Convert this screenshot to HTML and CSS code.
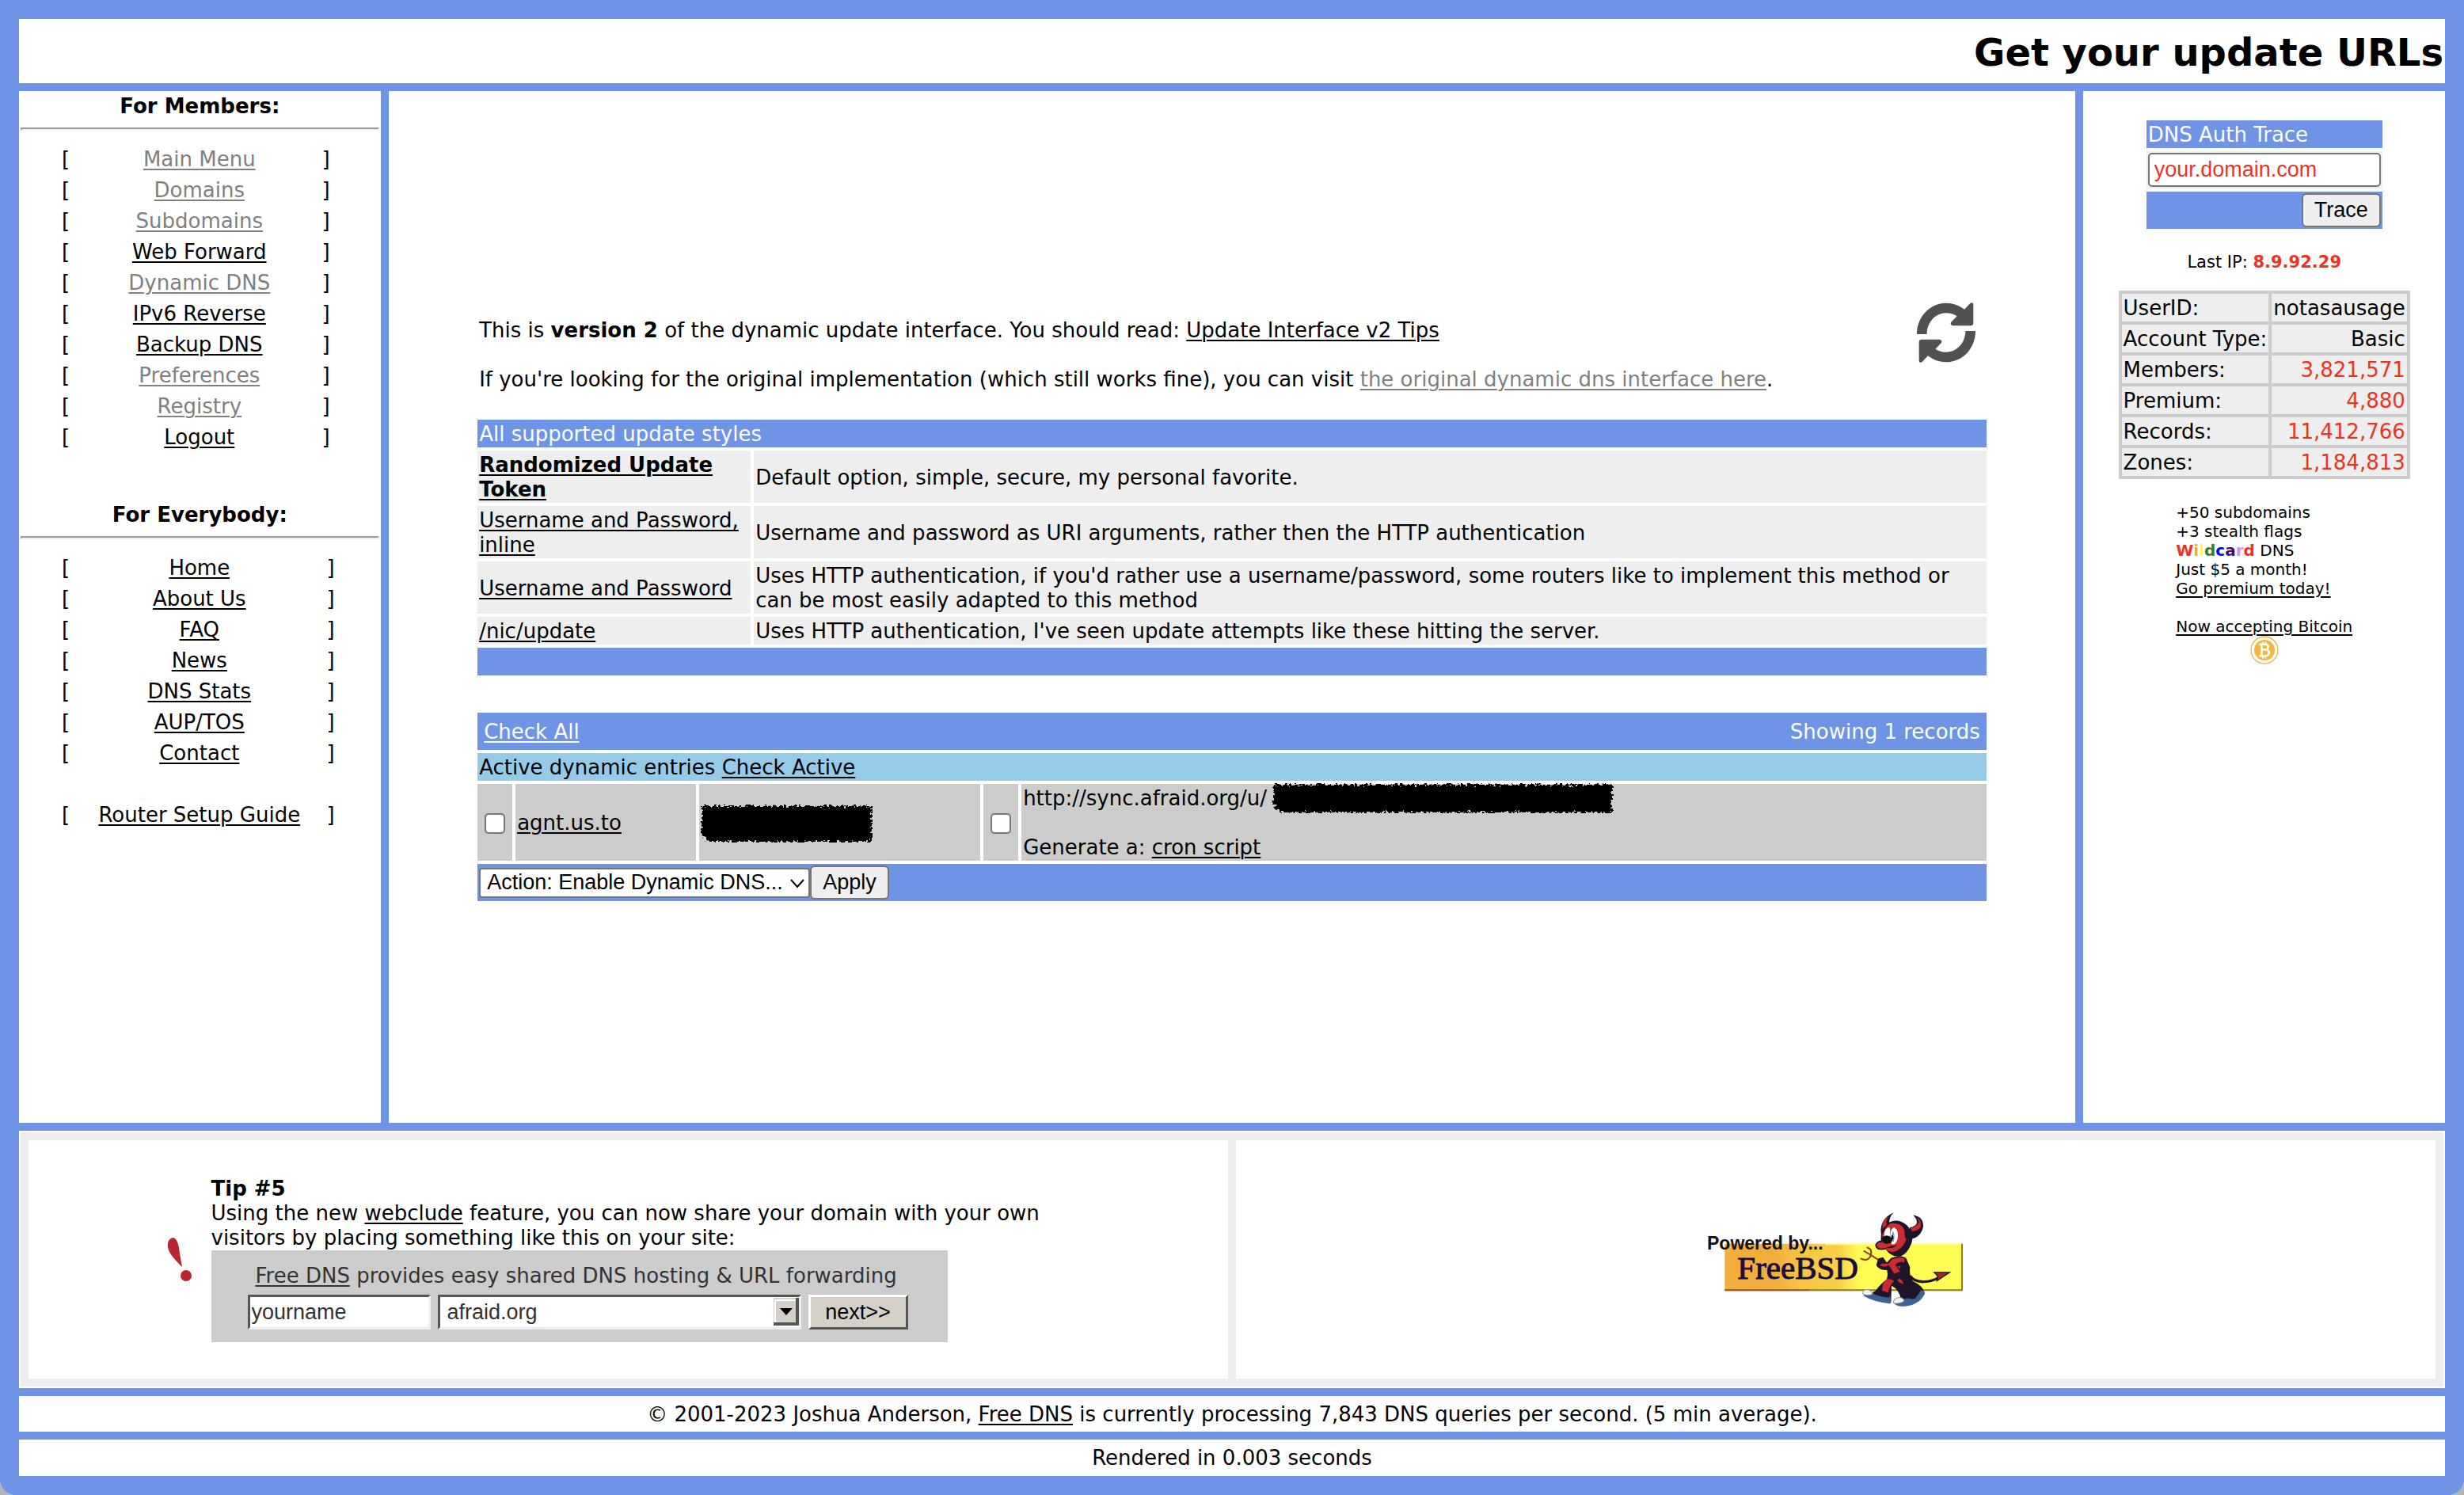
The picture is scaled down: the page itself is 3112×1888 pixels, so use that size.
FILE: index.html
```html
<!DOCTYPE html>
<html lang="en">
<head>
<meta charset="utf-8">
<title>Get your update URLs</title>
<link rel="stylesheet" href="styles.css">
</head>
<body>
<header class="panel masthead"><h1>Get your update URLs</h1></header>

<div class="columns">
  <nav class="panel sidebar">
    <h2>For Members:</h2>
    <hr>
    <ul class="menu members">
      <li><span>[</span><a class="visited" href="#">Main Menu</a><span>]</span></li>
      <li><span>[</span><a class="visited" href="#">Domains</a><span>]</span></li>
      <li><span>[</span><a class="visited" href="#">Subdomains</a><span>]</span></li>
      <li><span>[</span><a href="#">Web Forward</a><span>]</span></li>
      <li><span>[</span><a class="visited" href="#">Dynamic DNS</a><span>]</span></li>
      <li><span>[</span><a href="#">IPv6 Reverse</a><span>]</span></li>
      <li><span>[</span><a href="#">Backup DNS</a><span>]</span></li>
      <li><span>[</span><a class="visited" href="#">Preferences</a><span>]</span></li>
      <li><span>[</span><a class="visited" href="#">Registry</a><span>]</span></li>
      <li><span>[</span><a href="#">Logout</a><span>]</span></li>
    </ul>
    <h2>For Everybody:</h2>
    <hr>
    <ul class="menu">
      <li><span>[</span><a href="#">Home</a><span>]</span></li>
      <li><span>[</span><a href="#">About Us</a><span>]</span></li>
      <li><span>[</span><a href="#">FAQ</a><span>]</span></li>
      <li><span>[</span><a href="#">News</a><span>]</span></li>
      <li><span>[</span><a href="#">DNS Stats</a><span>]</span></li>
      <li><span>[</span><a href="#">AUP/TOS</a><span>]</span></li>
      <li><span>[</span><a href="#">Contact</a><span>]</span></li>
      <li class="apart"><span>[</span><a href="#">Router Setup Guide</a><span>]</span></li>
    </ul>
  </nav>

  <main class="panel content">
    <div class="content-body">
      <div class="intro">
        <div class="intro-text">
          <p>This is <b>version 2</b> of the dynamic update interface. You should read: <a href="#">Update Interface v2 Tips</a></p>
          <p>If you're looking for the original implementation (which still works fine), you can visit <a class="visited" href="#">the original dynamic dns interface here</a>.</p>
        </div>
        <svg class="refresh" viewBox="60 36 222 228" aria-hidden="true">
          <path id="arrow" d="M60 156C60 90 109 38 171 38C197 38 221 47 240 62L262 39Q274 32 274 44V114Q274 124 264 124H196Q184 120 190 110L212 88C200 80 186 76 171 76C130 76 98 112 98 156Z"/>
          <use href="#arrow" transform="rotate(180 171 150)"/>
        </svg>
      </div>

      <table class="styles">
        <colgroup><col class="col-name"><col></colgroup>
        <thead><tr class="bar"><th colspan="2">All supported update styles</th></tr></thead>
        <tbody>
          <tr><td><a href="#"><b>Randomized Update Token</b></a></td><td>Default option, simple, secure, my personal favorite.</td></tr>
          <tr><td><a href="#">Username and Password, inline</a></td><td>Username and password as URI arguments, rather then the HTTP authentication</td></tr>
          <tr><td><a href="#">Username and Password</a></td><td>Uses HTTP authentication, if you'd rather use a username/password, some routers like to implement this method or can be most easily adapted to this method</td></tr>
          <tr><td><a href="#">/nic/update</a></td><td>Uses HTTP authentication, I've seen update attempts like these hitting the server.</td></tr>
        </tbody>
        <tfoot><tr class="bar"><td colspan="2">&nbsp;</td></tr></tfoot>
      </table>

      <form class="entries-form">
      <table class="entries">
        <colgroup><col class="col-tick"><col class="col-host"><col class="col-address"><col class="col-tick"><col></colgroup>
        <tbody>
          <tr class="bar"><td colspan="5"><div class="bar-row"><a href="#">Check All</a><span>Showing 1 records</span></div></td></tr>
          <tr class="subhead"><td colspan="5">Active dynamic entries <a href="#">Check Active</a></td></tr>
          <tr class="entry">
            <td class="tick"><input type="checkbox" aria-label="Select agnt.us.to"></td>
            <td><a href="#">agnt.us.to</a></td>
            <td><svg class="redact address" viewBox="0 0 217 48" aria-hidden="true"><defs><filter id="rough" x="-5%" y="-20%" width="110%" height="140%"><feTurbulence type="fractalNoise" baseFrequency=".25 .3" numOctaves="3" seed="4"/><feDisplacementMap in="SourceGraphic" scale="10" xChannelSelector="R" yChannelSelector="G"/></filter></defs><path filter="url(#rough)" d="M1 2H216V47H10L1 38Z"/></svg></td>
            <td class="tick"><input type="checkbox" aria-label="Select update URL"></td>
            <td>
              <div class="url">http://sync.afraid.org/u/<svg class="redact token" viewBox="0 0 432 38" aria-hidden="true"><path filter="url(#rough)" d="M2 2H430V37H12L2 28Z"/></svg></div>
              <div class="generate">Generate a: <a href="#">cron script</a></div>
            </td>
          </tr>
          <tr class="bar actions"><td colspan="5"><div class="action-row">
            <span class="picker"><select aria-label="Action"><option>Action: Enable Dynamic DNS...</option></select><svg viewBox="0 0 18 12" aria-hidden="true"><path d="M1 1L9 10L17 1"/></svg></span>
            <button type="button">Apply</button>
          </div></td></tr>
        </tbody>
      </table>
      </form>
    </div>
  </main>

  <aside class="panel account">
    <form class="trace">
      <label class="trace-title" for="trace">DNS Auth Trace</label>
      <div class="trace-field"><input id="trace" type="text" value="your.domain.com"></div>
      <div class="trace-action"><button type="button">Trace</button></div>
    </form>
    <p class="last-ip">Last IP: <b>8.9.92.29</b></p>
    <table class="stats">
      <tr><th>UserID:</th><td>notasausage</td></tr>
      <tr><th>Account Type:</th><td>Basic</td></tr>
      <tr><th>Members:</th><td class="count">3,821,571</td></tr>
      <tr><th>Premium:</th><td class="count">4,880</td></tr>
      <tr><th>Records:</th><td class="count">11,412,766</td></tr>
      <tr><th>Zones:</th><td class="count">1,184,813</td></tr>
    </table>
    <div class="promo">
      <p>+50 subdomains<br>+3 stealth flags<br><b><i class="c-red">W</i><i class="c-orange">i</i><i class="c-yellow">l</i><i class="c-green">d</i><i class="c-blue">c</i><i class="c-indigo">a</i><i class="c-violet">r</i><i class="c-red">d</i></b> DNS<br>Just $5 a month!<br><a href="#">Go premium today!</a></p>
      <p><a href="#">Now accepting Bitcoin</a></p>
      <svg class="bitcoin" viewBox="0 0 108 108" aria-hidden="true">
        <circle class="ring" cx="54" cy="54" r="51"/>
        <circle class="coin" cx="54" cy="54" r="39"/>
        <path class="sign" d="M34 32H46M34 76H46M43 32V76M42 32H58C71 32 71 52 58 52H42M58 52C76 52 76 76 58 76H42"/>
        <path class="ticks" d="M48 22V32M58 22V32M48 76V86M58 76V86"/>
      </svg>
    </div>
  </aside>
</div>

<section class="panel tips">
  <div class="tips-frame">
    <div class="tip-cell">
      <svg class="bang" viewBox="0 0 31 55" aria-hidden="true"><path d="M1 12C0 4 4 0 8 0C13 1 15 10 16 20L19 37C11 29 2 20 1 12Z"/><ellipse cx="24" cy="48" rx="7" ry="7"/></svg>
      <div class="tip-text">
        <p><b>Tip #5</b><br>Using the new <a href="#">webclude</a> feature, you can now share your domain with your own visitors by placing something like this on your site:</p>
        <div class="banner">
          <p><a href="#">Free DNS</a> provides easy shared DNS hosting &amp; URL forwarding</p>
          <div class="banner-row">
            <input type="text" value="yourname" aria-label="Your name">
            <span class="banner-select"><select aria-label="Domain"><option>afraid.org</option></select><svg viewBox="0 0 32 35" aria-hidden="true"><path class="face" d="M0 0H32V35H0Z"/><path class="light" d="M2 33V3H29"/><path class="dark" d="M0 33H30V0"/><path class="mark" d="M8 13H24L16 22Z"/></svg></span>
            <button type="button">next&gt;&gt;</button>
          </div>
        </div>
      </div>
    </div>
    <div class="tip-cell">
      <svg class="freebsd" viewBox="165 140 990 380" role="img" aria-label="Powered by FreeBSD">
        <defs>
          <linearGradient id="gold"><stop offset=".2" stop-color="#f1ae3c"/><stop offset=".32" stop-color="#f6c443"/><stop offset=".48" stop-color="#f8d048"/><stop offset=".57" stop-color="#fffd54"/></linearGradient>
        </defs>
        <path fill="url(#gold)" d="M238 271H1140V449H238Z"/>
        <path fill="#fff9a0" d="M620 268H1138V275H620Z"/>
        <path fill="#8a7d20" d="M1134 271H1140V449H560V443H1134Z"/>
        <path fill="#a8441c" d="M238 443H560V449H238Z"/>
        <text class="powered" x="171" y="293">Powered by...</text>
        <text class="brand" x="286" y="402">FreeBSD</text>
        <path fill="none" stroke="#201428" stroke-width="10" d="M940 392C960 425 1020 418 1052 396"/>
        <path fill="#b0202c" stroke="#201428" stroke-width="4" d="M1032 379H1090L1042 411L1046 395Z"/>
        <path fill="none" stroke="#8c3c1c" stroke-width="6" d="M752 326Q778 340 790 318Q800 290 776 284M764 297L796 316L830 338"/>
        <path fill="#201428" d="M868 325Q905 310 925 325L940 360Q936 390 950 412Q990 430 996 460L976 480Q940 488 905 480Q900 445 870 430L868 494L800 462Q820 430 852 405Q858 385 852 370Q822 372 812 352L820 326L838 322L852 342Z"/>
        <path fill="#cc2b30" d="M872 330Q905 316 920 328L918 342Q900 334 884 350L902 376L880 384L860 352Q836 362 824 352L834 346L858 346ZM850 406Q866 400 880 412Q860 430 858 456L834 448Q832 425 850 406ZM900 402Q912 408 916 424Q900 420 892 410ZM890 358L904 354L902 364Z"/>
        <path fill="#201428" d="M848 292Q810 300 808 275Q812 262 830 258Q826 220 852 195Q890 168 928 200Q960 235 944 272Q930 308 905 318Q870 324 848 292Z"/>
        <path fill="#cc2b30" d="M834 244Q832 208 868 193Q914 190 920 226Q918 246 926 254Q910 296 872 302Q850 300 848 286Q880 292 896 270Q890 280 870 278Q820 300 813 276Q818 262 834 266Z"/>
        <path fill="#201428" d="M832 242Q818 180 878 152Q858 172 862 196L848 210ZM938 210Q986 198 952 162Q992 168 990 206Q980 248 942 252Z"/>
        <path fill="#cc2b30" d="M836 214Q830 186 858 168Q848 184 852 198ZM942 212Q992 196 962 168Q986 180 980 208Q968 222 948 224Z"/>
        <path fill="#fff" d="M842 244Q840 212 862 208Q868 222 862 246ZM866 252Q862 214 880 208Q900 222 892 256Q884 278 870 272Z"/>
        <path fill="#6aa0c8" d="M874 222Q886 236 878 264L870 258Z"/>
        <path fill="#111" d="M830 250Q848 232 864 244Q880 256 868 266Q850 276 838 266ZM870 236Q880 240 876 254L868 252Z"/>
        <path fill="#3c6294" d="M774 446Q830 470 866 470L866 498Q800 490 764 468ZM884 482Q940 486 962 450Q990 440 996 458Q980 500 920 508Q884 508 878 494Z"/>
        <path fill="#201428" d="M800 452Q836 446 862 462L862 474Q830 474 800 460ZM930 450Q960 436 984 444L960 478Q940 484 920 470Z"/>
        <path fill="#f2f2ee" stroke="#8a8f98" stroke-width="3" d="M762 462Q758 446 776 444Q796 446 798 462Q780 470 762 462ZM878 496Q874 476 902 474Q926 480 912 492Q890 500 878 496Z"/>
      </svg>
    </div>
  </div>
</section>

<footer class="panel line">© 2001-2023 Joshua Anderson, <a href="#">Free DNS</a> is currently processing 7,843 DNS queries per second. (5 min average).</footer>
<div class="panel line">Rendered in 0.003 seconds</div>
</body>
</html>
```
FILE: styles.css
```css
* { box-sizing: border-box; }

html { background: #b4b4b4; }

body {
  margin: 0;
  min-height: 100vh;
  padding: 24px;
  display: flex;
  flex-direction: column;
  gap: 10px;
  background: #6f94e6;
  border-radius: 0 0 20px 20px;
  color: #000;
  font: 26px/31px "DejaVu Sans", Verdana, sans-serif;
}

h1, h2, p, ul { margin: 0; padding: 0; }
a { color: inherit; text-decoration-thickness: 2px; text-underline-offset: 3px; }
.visited { color: #808080; }
.panel { background: #fff; }
svg { display: block; flex: none; }

button, select, input { font: 27px/31px "Liberation Sans", Arial, sans-serif; color: #000; margin: 0; }
button {
  border: 2px solid #767676;
  border-radius: 6px;
  background: #efefef;
  padding: 0 14px;
}

.masthead { padding: 13px 2px 10px; text-align: right; }
h1 { font-size: 48px; line-height: 58px; }

.columns {
  flex: 1;
  display: grid;
  grid-template-columns: 15fr 70fr 15fr;
  gap: 10px;
}

/* Left menus */
.sidebar { padding: 4px 2px; }
h2 { font-size: 26px; line-height: 31px; text-align: center; }
hr { margin: 11px 0 0; border: 2px solid; border-color: #9a9a9a #eee #eee #9a9a9a; }
.menu { list-style: none; margin: 17px 53px 63px 52px; }
.menu li {
  display: grid;
  grid-template-columns: 13px 1fr 13px;
  padding: 4px 0;
  text-align: center;
}
.members li { grid-template-columns: 19px 1fr 19px; }
.menu span { text-align: left; }
.menu a { justify-self: center; }
.menu .apart { margin-top: 39px; }

/* Centre column */
.content { display: flex; flex-direction: column; align-items: center; justify-content: center; padding-bottom: 9px; }
.content-body { width: calc(90% - 4px); }
.intro { display: flex; justify-content: space-between; height: 144px; padding: 0 18px 0 6px; }
.intro-text { display: flex; flex-direction: column; gap: 31px; padding-top: 20px; }
.refresh { width: 74px; height: 76px; fill: #515151; }

.styles, .entries { width: 100%; table-layout: fixed; border-spacing: 4px; }
.styles td, .styles th, .entries td { padding: 3px 2px 1px; font-weight: normal; text-align: left; }
.styles td { background: #eee; }
.col-name { width: 345px; }
.bar th, .bar td, .styles .bar td { background: #6f94e6; color: #fff; }
.entries-form { margin-top: 39px; }
.col-tick { width: 44px; }
.col-host { width: 228px; }
.col-address { width: 355px; }
.bar-row { display: flex; justify-content: space-between; padding: 6px; }
.subhead td { background: #96cbe8; }
.entry td { background: #ccc; }
.entry .tick { text-align: center; }
.tick input {
  display: block;
  appearance: none;
  width: 26px;
  height: 26px;
  margin: 0 auto;
  border: 2px solid #767676;
  border-radius: 5px;
  background: #fff;
}
.address { width: 217px; height: 48px; }
.url { display: flex; }
.token { width: 432px; height: 38px; margin: -4px 0 -3px 6px; }
.generate { padding-top: 31px; }
.entries .actions td { padding: 2px; }
.action-row { display: flex; align-items: center; }
.action-row button { height: 43px; }
.picker { position: relative; width: 418px; }
.picker select {
  display: block;
  appearance: none;
  width: 100%;
  height: 38px;
  padding: 0 8px;
  border: 2px solid #767676;
  border-radius: 4px;
  background: #fff;
}
.picker svg { position: absolute; right: 7px; top: 14px; width: 18px; height: 12px; fill: none; stroke: #000; stroke-width: 2; }

/* Right column */
.account { display: flex; flex-direction: column; align-items: center; padding-top: 37px; }
.trace { width: 298px; display: flex; flex-direction: column; gap: 4px; }
.trace-title { padding: 3px 2px 1px; background: #6f94e6; color: #fff; }
.trace-field { padding: 2px; background: #eee; }
.trace-field input {
  display: block;
  width: 100%;
  height: 43px;
  padding: 0 6px;
  border: 2px solid #767676;
  border-radius: 5px;
  background: #fff;
  color: #eb3323;
}
.trace-action { display: flex; justify-content: flex-end; padding: 2px; background: #6f94e6; }
.trace-action button { height: 43px; }
.last-ip { margin-top: 30px; font-size: 21px; line-height: 24px; }
.last-ip b, .count { color: #eb3323; }
.stats { margin-top: 24px; border-spacing: 4px; background: #ccc; white-space: nowrap; }
.stats th, .stats td { padding: 3px 2px 1px; background: #eee; font-weight: normal; text-align: left; }
.stats td { text-align: right; }
.promo { margin-top: 30px; font-size: 20px; line-height: 24px; }
.promo p + p { margin-top: 24px; }
.promo i { font-style: normal; }
.c-red { color: #eb3323; }
.c-orange { color: #f1a73b; }
.c-yellow { color: #fffd54; }
.c-green { color: #377e22; }
.c-blue { color: #0000f5; }
.c-indigo { color: #45087e; }
.c-violet { color: #df8ae8; }
.bitcoin { width: 36px; height: 36px; margin: 0 auto; }
.ring { fill: none; stroke: #f4b641; stroke-width: 4; }
.coin { fill: #f4b641; }
.sign { fill: none; stroke: #fff; stroke-width: 8; }
.ticks { fill: none; stroke: #fff; stroke-width: 5; }

/* Tips strip */
.tips { padding: 2px; }
.tips-frame { display: grid; grid-template-columns: 1fr 1fr; gap: 10px; padding: 10px; background: #eee; }
.tip-cell { display: flex; align-items: center; justify-content: center; gap: 25px; min-height: 301px; background: #fff; }
.bang { width: 31px; height: 55px; fill: #b92732; }
.tip-text { width: 1110px; }
.banner { width: 930px; padding: 16px 46px; background: #ccc; color: #333; }
.banner p { padding: 1px 10px 8px; }
.banner-row { display: flex; gap: 9px; height: 44px; }
.banner input, .banner select {
  height: 44px;
  border: 3px solid;
  border-color: #555 #eee #eee #555;
  border-radius: 0;
  background: #fff;
  color: #333;
  padding: 0 2px;
}
.banner input { width: 231px; }
.banner-select { position: relative; width: 459px; }
.banner select { display: block; appearance: none; width: 100%; padding: 0 9px; }
.banner-select svg { position: absolute; right: 3px; top: 4px; width: 32px; height: 35px; }
.banner-select .face { fill: #d4d0c8; }
.banner-select .light { fill: none; stroke: #fff; stroke-width: 2; }
.banner-select .dark { fill: none; stroke: #555; stroke-width: 4; }
.banner button {
  width: 126px;
  padding: 0;
  border: 3px solid;
  border-color: #fff #555 #555 #fff;
  border-radius: 0;
  background: #d4d0c8;
}
.freebsd { width: 330px; height: 127px; }
.powered { font: bold 69px "Liberation Sans", Arial, sans-serif; fill: #111; }
.brand { font: 123px "Liberation Serif", serif; fill: #1c0c3c; stroke: #1c0c3c; stroke-width: 3; }

.line { padding: 8px 0 6px; text-align: center; }
.line:last-child { padding-bottom: 7px; }
```
